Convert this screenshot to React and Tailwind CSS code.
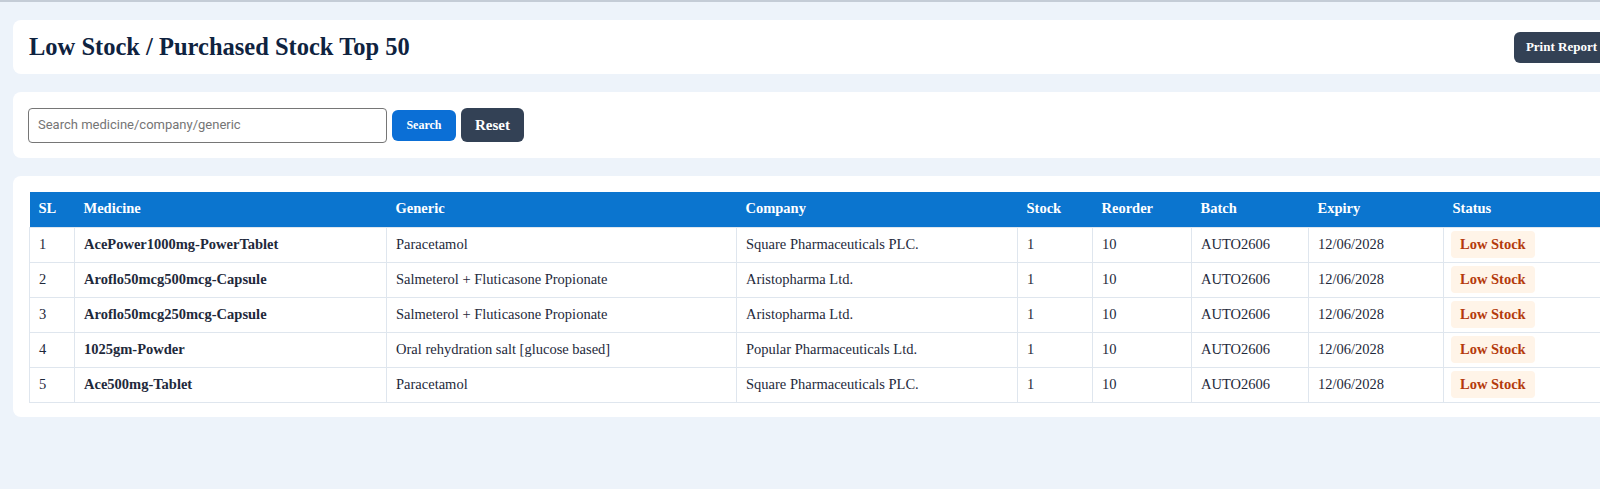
import React from "react";

const rows = [
  ["1","AcePower1000mg-PowerTablet","Paracetamol","Square Pharmaceuticals PLC."],
  ["2","Aroflo50mcg500mcg-Capsule","Salmeterol + Fluticasone Propionate","Aristopharma Ltd."],
  ["3","Aroflo50mcg250mcg-Capsule","Salmeterol + Fluticasone Propionate","Aristopharma Ltd."],
  ["4","1025gm-Powder","Oral rehydration salt [glucose based]","Popular Pharmaceuticals Ltd."],
  ["5","Ace500mg-Tablet","Paracetamol","Square Pharmaceuticals PLC."],
];
const widths = [45,312,350,281,75,99,117,135,160];
const heads = ["SL","Medicine","Generic","Company","Stock","Reorder","Batch","Expiry","Status"];

export default function App() {
  return (
    <div className="w-[1600px] h-[489px] overflow-hidden bg-[#edf3fa] border-t-2 border-[#c4ccd6] text-[#1e293b]" style={{fontFamily:'"Liberation Serif", Cambria, serif'}}>
      <div className="w-[1660px] pl-[13px] pt-[18px] flex flex-col gap-[18px]">
        <div className="w-[1612px] h-[54px] bg-white rounded-lg flex items-center justify-between pl-4 pr-[16px]">
          <h1 className="text-[24.5px] font-bold text-[#0f2340]">Low Stock / Purchased Stock Top 50</h1>
          <button className="h-[31px] px-3 rounded-md bg-[#334155] text-white text-[13px] font-bold">Print Report</button>
        </div>
        <div className="w-[1612px] h-[66px] bg-white rounded-lg flex items-center pl-[15px] gap-[5px]">
          <div className="w-[359px] h-[35px] border border-[#767676] rounded-sm flex items-center px-[9px] text-[13px] text-[#757575]" style={{fontFamily:'Roboto, "Liberation Sans", sans-serif'}}>Search medicine/company/generic</div>
          <button className="w-[64px] h-[31px] rounded-md bg-[#0b6fd6] text-white text-[12px] font-bold">Search</button>
          <button className="w-[63px] h-[34px] rounded-md bg-[#334155] text-white text-[15px] font-bold">Reset</button>
        </div>
        <div className="w-[1612px] h-[241px] bg-white rounded-lg pl-4 pt-4">
          <table className="border-collapse text-[14.5px] table-fixed" style={{width: widths.reduce((a,b)=>a+b,0)}}>
            <colgroup>{widths.map((w,i)=><col key={i} style={{width:w}} />)}</colgroup>
            <thead>
              <tr className="bg-[#0b75cf] text-white h-[35px]">
                {heads.map(h=><th key={h} className="text-left font-bold px-[9px] text-[14.5px]">{h}</th>)}
              </tr>
            </thead>
            <tbody>
              {rows.map(r=>(
                <tr key={r[0]} className="h-[35px]">
                  <td className="border border-[#dfe6ee] px-[9px]">{r[0]}</td>
                  <td className="border border-[#dfe6ee] px-[9px] font-bold">{r[1]}</td>
                  <td className="border border-[#dfe6ee] px-[9px]">{r[2]}</td>
                  <td className="border border-[#dfe6ee] px-[9px]">{r[3]}</td>
                  <td className="border border-[#dfe6ee] px-[9px]">1</td>
                  <td className="border border-[#dfe6ee] px-[9px]">10</td>
                  <td className="border border-[#dfe6ee] px-[9px]">AUTO2606</td>
                  <td className="border border-[#dfe6ee] px-[9px]">12/06/2028</td>
                  <td className="border border-[#dfe6ee] px-[7px]"><span className="inline-block px-[9px] py-[3px] rounded bg-[#fff4e8] text-[#b43a0c] font-bold">Low Stock</span></td>
                </tr>
              ))}
            </tbody>
          </table>
        </div>
      </div>
    </div>
  );
}
